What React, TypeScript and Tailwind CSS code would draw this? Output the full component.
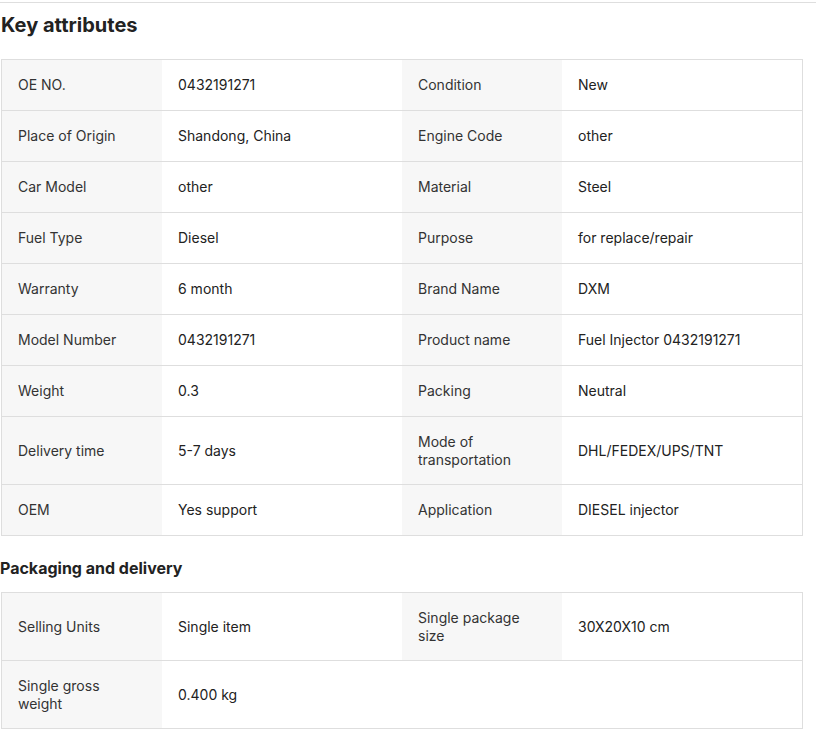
import React from "react";

const keyAttrs: [string, string, string, string][] = [
  ["OE NO.", "0432191271", "Condition", "New"],
  ["Place of Origin", "Shandong, China", "Engine Code", "other"],
  ["Car Model", "other", "Material", "Steel"],
  ["Fuel Type", "Diesel", "Purpose", "for replace/repair"],
  ["Warranty", "6 month", "Brand Name", "DXM"],
  ["Model Number", "0432191271", "Product name", "Fuel Injector 0432191271"],
  ["Weight", "0.3", "Packing", "Neutral"],
  ["Delivery time", "5-7 days", "Mode of transportation", "DHL/FEDEX/UPS/TNT"],
  ["OEM", "Yes support", "Application", "DIESEL injector"],
];

function Label({ text }: { text: string }) {
  return (
    <div className="w-[160px] shrink-0 bg-[#f7f7f7] px-4 py-4 min-h-[50px] flex items-center text-[#333] leading-[17.5px]">
      {text}
    </div>
  );
}

function Value({ text }: { text: string }) {
  return (
    <div className="w-[240px] shrink-0 px-4 py-4 min-h-[50px] flex items-center text-[#222] leading-[17.5px]">
      {text}
    </div>
  );
}

function Row({ cells, last }: { cells: string[]; last: boolean }) {
  return (
    <div className={"flex " + (last ? "" : "border-b border-[#dedede]")}>
      {cells.map((c, i) =>
        i % 2 === 0 ? <Label key={i} text={c} /> : <Value key={i} text={c} />
      )}
    </div>
  );
}

export default function App() {
  return (
    <div
      className="w-[816px] bg-white text-[14px]"
      style={{ fontFamily: "Inter, 'Noto Sans', sans-serif" }}
    >
      <div className="mt-[2px] border-t border-[#dedede]">
        <h2 className="text-[20px] font-bold text-[#222] leading-[28px] pt-[8px] pl-[1px]">
          Key attributes
        </h2>
        <div className="mt-[20px] ml-[1px] w-[802px] border border-[#dedede]">
          {keyAttrs.map((r, i) => (
            <Row key={i} cells={r} last={i === keyAttrs.length - 1} />
          ))}
        </div>
        <h3 className="text-[16px] font-bold text-[#222] leading-[24px] mt-[20px]">
          Packaging and delivery
        </h3>
        <div className="mt-[12px] mb-[13px] ml-[1px] w-[802px] border border-[#dedede]">
          <Row cells={["Selling Units", "Single item", "Single package size", "30X20X10 cm"]} last={false} />
          <Row cells={["Single gross weight", "0.400 kg"]} last={true} />
        </div>
      </div>
    </div>
  );
}
